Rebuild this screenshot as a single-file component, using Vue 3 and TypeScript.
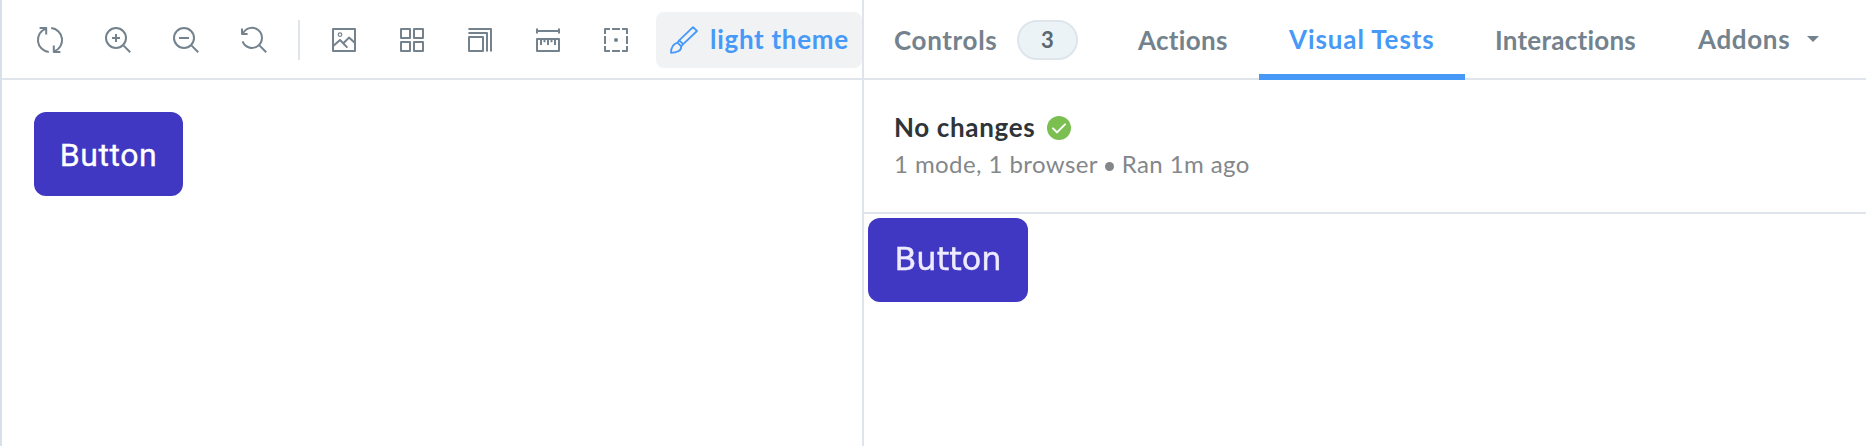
<script setup lang="ts">
interface Tool {
  name: string
  paths: string[]
  dot?: { cx: number; cy: number; r: number; filled: boolean }
}

const lens = 'M6 1a5 5 0 1 1 0 10a5 5 0 1 1 0-10zM9.7 9.7l3.4 3.4'

const zoomTools: Tool[] = [
  { name: 'Remount', paths: ['M1.8 1h3.3v3.3M5 1.3A6 6 0 0 0 6.4 12.95M12.2 13H8.9V9.7M9 12.7A6 6 0 0 0 7.6 1.05'] },
  { name: 'Zoom in', paths: [lens, 'M6 4v4M4 6h4'] },
  { name: 'Zoom out', paths: [lens, 'M3.5 6h5'] },
  { name: 'Reset zoom', paths: ['M1 1.2V4h2.8M1.4 3.9A5 5 0 1 1 1.3 7.7M9.7 9.7l3.4 3.4'] },
]

const viewTools: Tool[] = [
  {
    name: 'Background',
    paths: ['M1.5 1.5h11v11h-11zM1.6 10L5 7l3.7 3.8M6.8 8.5l2.7-2.7 3 2.7'],
    dot: { cx: 5, cy: 4.3, r: 0.9, filled: false },
  },
  { name: 'Grid', paths: ['M1.5 1.5H6V6H1.5zM8 1.5h4.5V6H8zM1.5 8H6v4.5H1.5zM8 8h4.5v4.5H8z'] },
  { name: 'Viewport', paths: ['M1.5 5.5h7v7h-7zM1.2 3.5h9.3v9.3M1.2 1.5h11.3v11.3'] },
  {
    name: 'Measure',
    paths: ['M1.5 1.2v2.6M12.5 1.2v2.6M1.5 2.5h11M1.5 6.5h11v6h-11zM3.5 6.5v3M5.25 6.5v1.6M7 6.5v3M8.75 6.5v1.6M10.5 6.5v3'],
  },
  {
    name: 'Outline',
    paths: ['M1.5 4V1.5H4M5 1.5h4M10 1.5h2.5V4M12.5 5v4M12.5 10v2.5H10M9 12.5H5M4 12.5H1.5V10M1.5 9V5'],
    dot: { cx: 7, cy: 7, r: 1, filled: true },
  },
]

const groups: Tool[][] = [zoomTools, viewTools]
</script>

<template>
  <main class="shell">
    <section class="preview">
      <header class="bar tools">
        <div v-for="(group, g) in groups" :key="g" class="group">
          <button v-for="tool in group" :key="tool.name" class="tool" :aria-label="tool.name">
            <svg class="icon" viewBox="0 0 14 14">
              <path v-for="d in tool.paths" :key="d" :d="d" />
              <circle
                v-if="tool.dot"
                :class="tool.dot.filled ? 'filled' : 'ring'"
                :cx="tool.dot.cx"
                :cy="tool.dot.cy"
                :r="tool.dot.r"
              />
            </svg>
          </button>
        </div>
        <button class="theme">
          <svg class="icon" viewBox="0 0 14 14">
            <path d="M11.5.6l2 1.9-6.9 6.6-2-1.9zM4.6 7.2L3.8 8.3l1.8 1.9 1-1.1M3.8 8.3C1.2 9 .5 10.6.5 13.4c2.6 0 5.3-.9 5.1-3.2" />
          </svg>
          <span class="theme-text">light theme</span>
        </button>
      </header>
      <div class="canvas"><button class="story-button">Button</button></div>
    </section>

    <section class="panel">
      <nav class="bar tabs">
        <button class="tab controls"><span class="t-controls">Controls</span><span class="badge">3</span></button>
        <button class="tab actions"><span class="t-actions">Actions</span></button>
        <button class="tab visual"><span class="t-visual">Visual Tests</span></button>
        <button class="tab interactions"><span class="t-interactions">Interactions</span></button>
        <button class="tab addons">
          <span class="t-addons">Addons</span>
          <svg class="caret" viewBox="0 0 12 6"><path d="M0 0h12L6 6z" /></svg>
        </button>
      </nav>
      <div class="status">
        <div class="title">
          <span class="t-title">No changes</span>
          <svg class="check" viewBox="0 0 24 24">
            <circle cx="12" cy="12" r="12" />
            <path d="M6 12.4l4 4 8-8" />
          </svg>
        </div>
        <div class="detail">1 mode, 1 browser <i class="bullet"></i> Ran 1m ago</div>
      </div>
      <div class="snapshot"><span class="snapshot-text">Button</span></div>
    </section>
  </main>
</template>

<style>
body {
  margin: 0;
  overflow: hidden;
  background: #fff;
}
</style>

<style scoped>
.shell {
  box-sizing: border-box;
  display: flex;
  width: 1866px;
  height: 446px;
  border-left: 2px solid #d8e0eb;
  font-family: Lato, 'Open Sans', sans-serif;
  font-variant-ligatures: none;
  color: #73828c;
}
button {
  padding: 0;
  border: 0;
  background: none;
  font: inherit;
  color: inherit;
}
.preview {
  width: 860px;
  flex: none;
}
.panel {
  width: 1002px;
  border-left: 2px solid #dfe5ea;
}
.bar {
  box-sizing: border-box;
  display: flex;
  height: 80px;
  border-bottom: 2px solid #dfe5ea;
  white-space: nowrap;
}
.tools {
  align-items: center;
  padding: 2px 0 0 34px;
}
.group {
  display: flex;
  gap: 40px;
  height: 40px;
  align-items: center;
}
.group + .group {
  margin-left: 30px;
  padding-left: 30px;
  border-left: 2px solid #dfe5ea;
}
.tool {
  display: flex;
}
.icon {
  width: 28px;
  height: 28px;
  fill: none;
  stroke: currentColor;
  stroke-width: 1;
  stroke-linejoin: round;
}
.ring {
  stroke-width: 0.6;
}
.filled {
  fill: currentColor;
  stroke: none;
}
.theme {
  box-sizing: border-box;
  display: flex;
  align-items: center;
  gap: 12px;
  width: 206px;
  height: 56px;
  margin-left: 26px;
  padding-left: 14px;
  border-radius: 8px;
  background: #f0f2f4;
  color: #4799f8;
  font-size: 26px;
  font-weight: 700;
}
.theme .icon {
  stroke-width: 0.9;
}
.theme-text {
  line-height: 32px;
  margin-top: -2px;
  letter-spacing: 0.7px;
}
.canvas {
  padding: 32px;
}
.story-button {
  display: block;
  width: 149px;
  height: 84px;
  border-radius: 12px;
  background: #4038c2;
  color: #fff;
  font: 400 32px/86px Roboto, sans-serif;
  letter-spacing: 0.6px;
  -webkit-text-stroke: 0.3px #fff;
}
.tabs {
  font-size: 26px;
  font-weight: 700;
}
.tab {
  box-sizing: border-box;
  display: flex;
  align-items: center;
  height: 80px;
  padding-left: 30px;
  flex: none;
}
.controls {
  width: 244px;
}
.t-controls {
  width: 123px;
  text-align: left;
  letter-spacing: 0.65px;
}
.actions {
  width: 151px;
}
.t-actions {
  letter-spacing: 0.3px;
}
.visual {
  width: 206px;
  border-bottom: 6px solid #4799f8;
  padding-top: 4px;
  color: #4799f8;
}
.t-visual {
  letter-spacing: 0.9px;
}
.interactions {
  width: 203px;
}
.t-interactions {
  letter-spacing: 0.25px;
}
.addons {
  width: 160px;
  padding-bottom: 2px;
}
.t-addons {
  width: 109px;
  text-align: left;
  letter-spacing: 0.65px;
}
.badge {
  box-sizing: border-box;
  width: 61px;
  height: 40px;
  border: 2px solid #dfe5ea;
  border-radius: 20px;
  background: #ebf3f7;
  color: #5c6870;
  font-size: 22px;
  line-height: 35px;
}
.caret {
  width: 12px;
  height: 6px;
  fill: currentColor;
}
.status {
  box-sizing: border-box;
  height: 134px;
  padding: 32px 0 0 30px;
  border-bottom: 2px solid #dfe5ea;
}
.title {
  display: flex;
  align-items: center;
  height: 32px;
  color: #2e3438;
  font-size: 26px;
  font-weight: 700;
}
.t-title {
  width: 153px;
  margin-top: -2px;
  line-height: 32px;
  letter-spacing: 0.65px;
  white-space: nowrap;
}
.check {
  width: 24px;
  height: 24px;
  fill: #7bbf50;
}
.check path {
  fill: none;
  stroke: #fff;
  stroke-width: 2;
  stroke-linecap: round;
  stroke-linejoin: round;
}
.detail {
  margin-top: 4px;
  color: #83878a;
  font-size: 24px;
  line-height: 32px;
  letter-spacing: 0.42px;
}
.bullet {
  display: inline-block;
  width: 9px;
  height: 9px;
  margin: 0 1px 2px;
  border-radius: 50%;
  background: #83878a;
}
.snapshot {
  width: 160px;
  height: 84px;
  margin: 4px;
  border-radius: 12px;
  background: #4038c2;
  color: #eeeaff;
  font: 32px/83px 'DejaVu Sans', sans-serif;
  text-align: center;
}
.snapshot-text {
  filter: blur(0.6px);
  -webkit-text-stroke: 0.4px #eeeaff;
}
</style>
